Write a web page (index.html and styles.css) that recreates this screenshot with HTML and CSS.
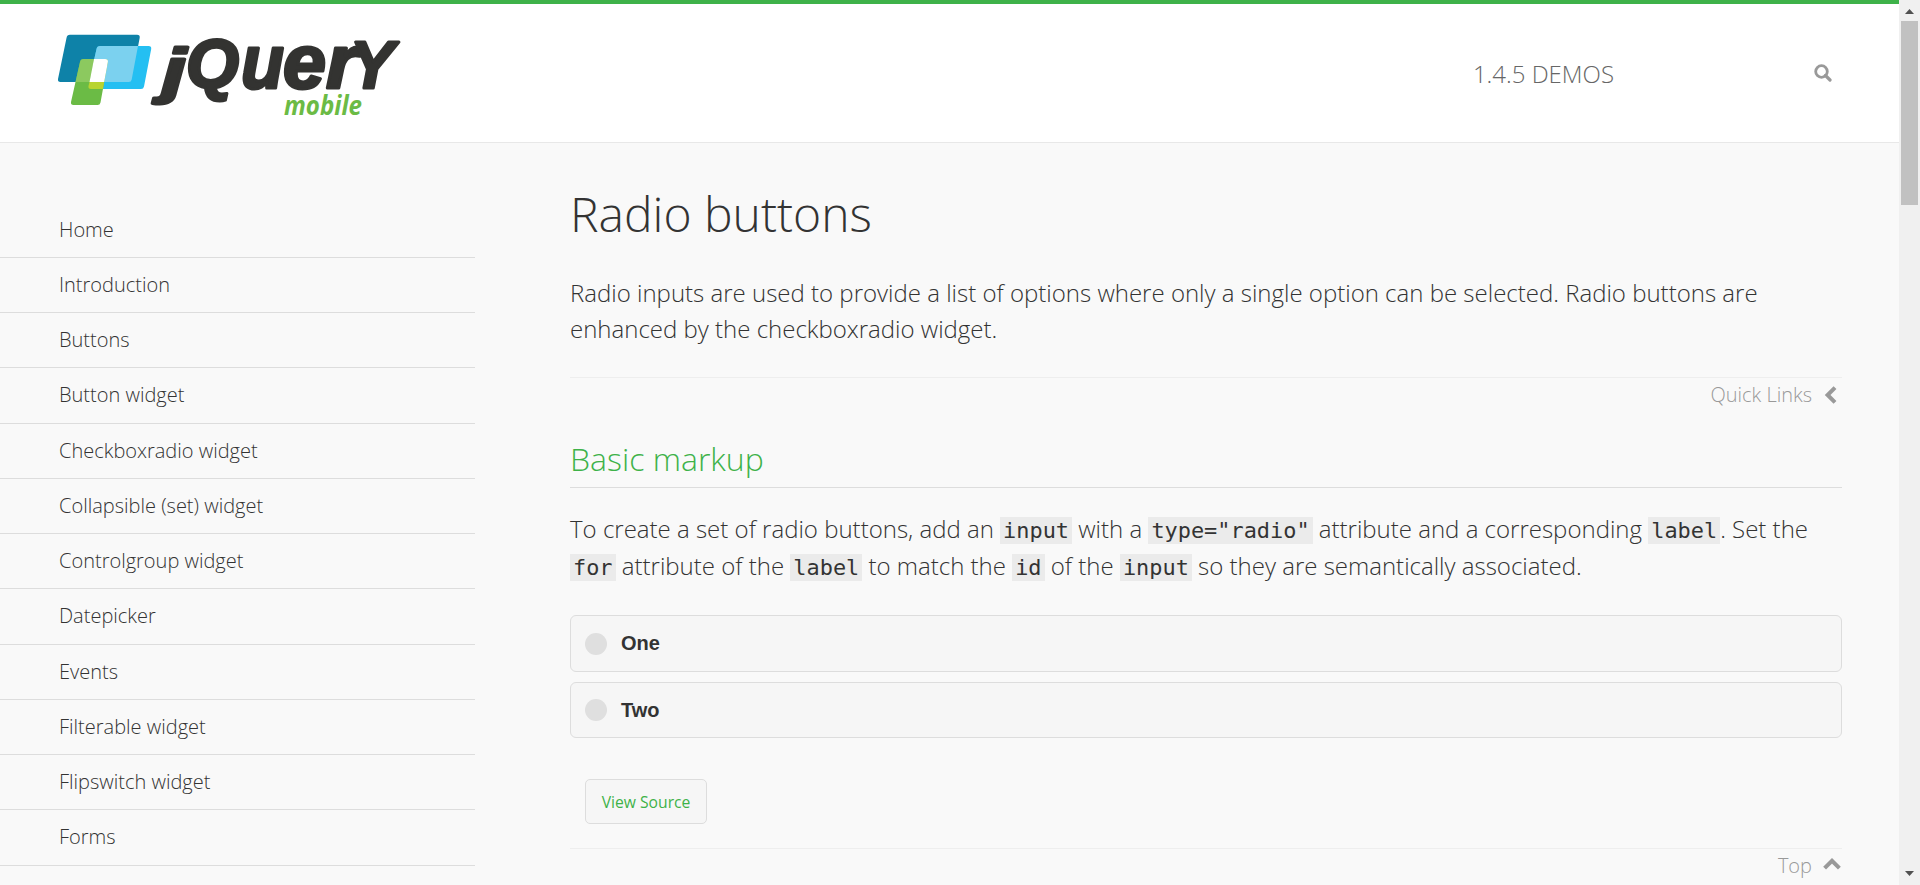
FILE: index.html
```html
<!DOCTYPE html>
<html lang="en">
<head>
<meta charset="utf-8">
<title>Radio buttons - jQuery Mobile Demos</title>
<link rel="stylesheet" href="styles.css">
</head>
<body>
<div class="viewport">
  <div class="page">
    <header class="header">
      <svg class="logo" width="350" height="90" viewBox="0 0 350 90" role="img" aria-label="jQuery mobile">
        <path fill="#0e82a8" d="M17 4.700h67q3.200 0 2.700 3l-8 41.800q-.5 2.500-3 2.500H7.500q-3 0-2.500-3L13.500 8q.5-3.300 3.500-3.300z"/>
        <path fill="#24bff2" d="M47 16h48.500q3.200 0 2.700 3l-7.200 37.500q-.5 2.500-3 2.500H38q-3 0-2.500-3L43.500 19q.5-3 3.500-3z"/>
        <path fill="#7bd1ef" d="M47 16h38l-6.300 33.500q-.5 2.500-3 2.500H36L43.500 19q.5-3 3.500-3z"/>
        <path fill="#6bbb45" d="M30.500 29h21.700q3.200 0 2.700 3L47.500 72.500q-.5 2.500-3 2.500H20.500q-3 0-2.500-3L27 32q.5-3 3.500-3z"/>
        <path fill="#8cc95f" d="M30.500 29H41L36.500 52H22.500L27 32q.5-3 3.500-3z"/>
        <path fill="#fff" d="M41 29h11.200q3.200 0 2.700 3L51.200 52H36.500z"/>
        <path fill="#b9d431" d="M36.500 52H51.200L50 59H38q-3 0-2.500-3z"/>
        <g class="logo-word">
          <text x="109" y="61" font-size="61" textLength="24" lengthAdjust="spacingAndGlyphs">j</text>
          <text x="133" y="57" font-size="69" textLength="53" lengthAdjust="spacingAndGlyphs">Q</text>
          <text x="188" y="57.500" font-size="76" textLength="43" lengthAdjust="spacingAndGlyphs">u</text>
          <text x="230" y="57.500" font-size="76" textLength="43" lengthAdjust="spacingAndGlyphs">e</text>
          <text x="273" y="57.500" font-size="76" textLength="32" lengthAdjust="spacingAndGlyphs">r</text>
          <text x="297" y="57.500" font-size="67" textLength="44" lengthAdjust="spacingAndGlyphs">Y</text>
        </g>
        <text class="logo-sub" x="231" y="84.500" font-size="26" textLength="78" lengthAdjust="spacingAndGlyphs">mobile</text>
      </svg>
      <div class="header-right">
        <h2 class="version">1.4.5 DEMOS</h2>
        <svg class="search" width="18" height="18" viewBox="0 0 18 18" fill="none" stroke="#999" stroke-width="2.800"><circle cx="7.500" cy="7.500" r="5.800"/><path d="M11.500 11.500l4.500 4.500" stroke-width="3.200" stroke-linecap="round"/></svg>
      </div>
    </header>
    <div class="body">
      <nav class="menu">
        <a>Home</a><a>Introduction</a><a>Buttons</a><a>Button widget</a><a>Checkboxradio widget</a><a>Collapsible (set) widget</a><a>Controlgroup widget</a><a>Datepicker</a><a>Events</a><a>Filterable widget</a><a>Flipswitch widget</a><a>Forms</a>
      </nav>
      <main class="content">
        <h1 class="title">Radio buttons</h1>
        <p class="intro">Radio inputs are used to provide a list of options where only a single option can be selected. Radio buttons are enhanced by the checkboxradio widget.</p>
        <a class="jump">Quick Links <svg class="jump-icon" width="18" height="18" viewBox="0 0 18 18" fill="none" stroke="#999" stroke-width="4"><path d="M12 1.600L4.600 9l7.400 7.400"/></svg></a>
        <h2 class="section-title">Basic markup</h2>
        <p class="text">To create a set of radio buttons, add an <code>input</code> with a <code>type="radio"</code> attribute and a corresponding <code>label</code>. Set the <code>for</code> attribute of the <code>label</code> to match the <code>id</code> of the <code>input</code> so they are semantically associated.</p>
        <div class="radios">
          <label class="radio"><span class="dot"></span>One</label>
          <label class="radio"><span class="dot"></span>Two</label>
        </div>
        <a class="source">View Source</a>
        <a class="jump">Top <svg class="jump-icon" width="18" height="18" viewBox="0 0 18 18" fill="none" stroke="#999" stroke-width="4"><path d="M1.600 11.200L9 3.800l7.400 7.400"/></svg></a>
      </main>
    </div>
  </div>
  <div class="scrollbar">
    <svg width="9" height="5" viewBox="0 0 9 5"><path d="M0 5L4.500 0 9 5z" fill="#505050"/></svg>
    <div class="thumb"></div>
    <svg class="down" width="9" height="5" viewBox="0 0 9 5"><path d="M0 0h9L4.500 5z" fill="#505050"/></svg>
  </div>
</div>
</body>
</html>
```
FILE: styles.css
```css
* { box-sizing: border-box; }
body {
  margin: 0;
  background: #f9f9f9;
  color: #333;
  font-family: "Open Sans", "Noto Sans", sans-serif;
  font-weight: 300;
  overflow: hidden;
}
.viewport { display: flex; height: 885px; }
.page { flex: 1; display: flex; flex-direction: column; overflow: hidden; }
.header {
  height: 143px;
  flex: none;
  display: flex;
  justify-content: space-between;
  align-items: flex-start;
  padding: 26px 67px 0 53px;
  background: #fff;
  border-top: 4px solid #3eb249;
  border-bottom: 1px solid #e8e8e8;
}
.logo { overflow: visible; }
.logo-word {
  fill: #333331;
  stroke: #333331;
  stroke-width: 3px;
  stroke-linejoin: round;
  font-family: "Liberation Sans", Arial, sans-serif;
  font-weight: 700;
  font-style: italic;
}
.logo-sub {
  fill: #6bbb45;
  font-family: "Open Sans", sans-serif;
  font-weight: 700;
  font-style: italic;
}
.header-right { display: flex; align-items: center; gap: 200px; padding-top: 26px; }
.search { margin-bottom: 3px; }
.version { margin: 0; font-size: 24px; font-weight: 300; line-height: 36px; color: #666; }
.body { display: flex; gap: 95px; padding-right: 57px; }
.menu { width: 475px; flex: none; padding-top: 59.650px; }
.menu a {
  display: block;
  height: 55.250px;
  padding-left: 59px;
  font-size: 20px;
  line-height: 54.700px;
  border-bottom: 1px solid #ddd;
}
.content { flex: 1; display: flex; flex-direction: column; }
.title { margin: 39px 0 0; font-size: 48px; font-weight: 300; line-height: 64px; }
.intro { margin: 29px 0 0; font-size: 24px; line-height: 36px; height: 102px; }
.jump {
  display: flex;
  justify-content: flex-end;
  align-items: center;
  gap: 11px;
  height: 34px;
  padding-right: 1px;
  border-top: 1px solid #eee;
  font-size: 20px;
  color: #999;
}
.jump-icon { margin-top: 1px; }
.section-title {
  margin: 24px 0 0;
  height: 53px;
  border-bottom: 1px solid #ddd;
  font-size: 32px;
  font-weight: 300;
  line-height: 48px;
  color: #3eb249;
}
.text { margin: 22px 0 0; height: 74px; font-size: 24px; line-height: 37px; }
.text code {
  padding: 1px 3px;
  background: #ebebeb;
  font-family: "DejaVu Sans Mono", monospace;
  font-size: 21.900px;
  font-weight: 400;
  line-height: 1;
}
.radios { display: flex; flex-direction: column; gap: 10px; margin-top: 31px; }
.radio {
  display: flex;
  align-items: center;
  gap: 14px;
  height: 57px;
  padding-left: 14px;
  border: 1px solid #ddd;
  border-radius: 6px;
  background: #f6f6f6;
  font: bold 20px "Liberation Sans", Arial, sans-serif;
}
.radio + .radio { height: 56px; }
.dot { width: 22px; height: 22px; border-radius: 50%; background: #dfdfdf; }
.source {
  align-self: flex-start;
  margin: 41px 0 24px 15px;
  width: 122px;
  height: 45px;
  border: 1px solid #ddd;
  border-radius: 5px;
  background: #f6f6f6;
  color: #3eb249;
  font-size: 15.700px;
  font-weight: 400;
  line-height: 44px;
  text-align: center;
}
.scrollbar {
  width: 21px;
  display: flex;
  flex-direction: column;
  align-items: center;
  padding: 9px 0;
  background: #f0f0f0;
}
.scrollbar svg { flex: none; }
.thumb { width: 17px; height: 184px; margin-top: 7px; background: #c1c1c1; }
.down { margin-top: auto; }
```
